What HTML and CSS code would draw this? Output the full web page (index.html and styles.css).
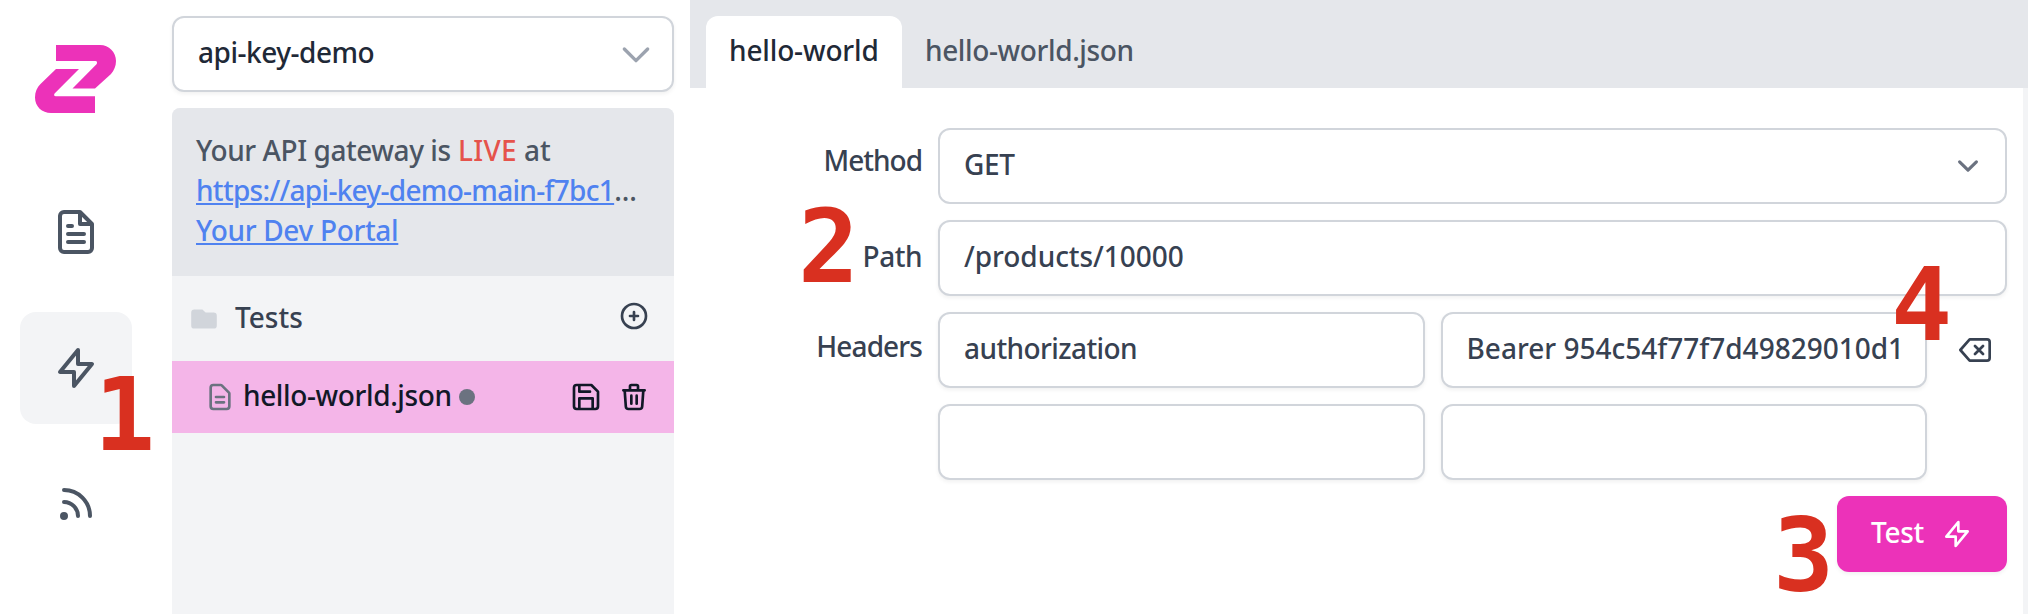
FILE: index.html
```
<!DOCTYPE html>
<html lang="en">
<head>
<meta charset="utf-8">
<title>API gateway tests</title>
<link rel="stylesheet" href="styles.css">
</head>
<body>
<nav class="rail">
  <svg class="logo" viewBox="35 45 81 68"><path d="M56 45H100C109 45 116 52 116 61C116 66 114 70.5 111 74L95 88.500H72.500L96.500 64.200C97.600 62.900 97 61 95.500 61H56ZM56 69H79L54.600 93.500C53.600 95 54.200 96.300 55.800 96.300H95V113H51C42 113 35 106.500 35 97.500C35 92 37 87.500 40.500 84Z"/></svg>
  <a class="rail-item"><svg class="icon icon-lg" viewBox="0 0 24 24"><path d="M14 2H6a2 2 0 0 0-2 2v16a2 2 0 0 0 2 2h12a2 2 0 0 0 2-2V8zM14 2v6h6M16 13H8M16 17H8M10 9H8"/></svg></a>
  <a class="rail-item active"><svg class="icon icon-lg" viewBox="0 0 24 24"><path d="M13 10V3L4 14h7v7l9-11h-7z"/></svg></a>
  <a class="rail-item"><svg class="icon icon-lg" viewBox="0 0 24 24"><path d="M6 5c7.180 0 13 5.820 13 13M6 11a7 7 0 017 7m-6 0a1 1 0 11-2 0 1 1 0 012 0z"/></svg></a>
</nav>

<aside class="explorer">
  <div class="box project">
    <span class="t-project">api-key-demo</span>
    <svg class="icon chevron-lg" viewBox="0 0 24 24"><path d="M19 9l-7 7-7-7"/></svg>
  </div>
  <div class="panel">
    <div class="info">
      <div><span class="t-gateway">Your API gateway is</span> <span class="live">LIVE</span> <span>at</span></div>
      <div><a class="link t-url">https://api-key-demo-main-f7bc1</a><span class="dots">...</span></div>
      <div><a class="link t-portal">Your Dev Portal</a></div>
    </div>
    <div class="folder">
      <svg class="icon-folder" viewBox="0 0 20 20"><path d="M2 6a2 2 0 012-2h5l2 2h5a2 2 0 012 2v6a2 2 0 01-2 2H4a2 2 0 01-2-2V6z"/></svg>
      <span class="folder-name">Tests</span>
      <svg class="icon" viewBox="0 0 24 24"><path d="M12 9v3m0 0v3m0-3h3m-3 0H9m12 0a9 9 0 11-18 0 9 9 0 0118 0z"/></svg>
    </div>
    <div class="file">
      <svg class="icon file-icon" viewBox="0 0 24 24"><path d="M9 12h6m-6 4h6m2 5H7a2 2 0 01-2-2V5a2 2 0 012-2h5.586a1 1 0 01.707.293l5.414 5.414a1 1 0 01.293.707V19a2 2 0 01-2 2z"/></svg>
      <span class="file-name t-json">hello-world.json</span>
      <span class="dirty"></span>
      <svg class="icon save" viewBox="0 0 24 24"><path d="M19 21H5a2 2 0 0 1-2-2V5a2 2 0 0 1 2-2h11l5 5v11a2 2 0 0 1-2 2zM17 21v-8H7v8M7 3v5h8"/></svg>
      <svg class="icon" viewBox="0 0 24 24"><path d="M19 7l-.867 12.142A2 2 0 0116.138 21H7.862a2 2 0 01-1.995-1.858L5 7m5 4v6m4-6v6m1-10V4a1 1 0 00-1-1h-4a1 1 0 00-1 1v3M4 7h16"/></svg>
    </div>
  </div>
</aside>

<main class="main">
  <header class="tabs">
    <div class="tab selected"><span class="t-tab">hello-world</span></div>
    <div class="tab"><span class="t-json">hello-world.json</span></div>
  </header>
  <div class="content">
    <form class="form">
      <label class="label label-method">Method</label>
      <div class="box flat wide">
        <span class="t-get">GET</span>
        <svg class="chevron-sm" viewBox="0 0 20 20"><path d="M6 8l4 4 4-4"/></svg>
      </div>
      <label class="label label-path">Path</label>
      <div class="box wide"><span class="t-path">/products/10000</span></div>
      <label class="label label-headers">Headers</label>
      <div class="box"><span class="t-auth">authorization</span></div>
      <div class="box"><span class="t-bearer">Bearer 954c54f77f7d49829010d1</span></div>
      <div class="remove"><svg class="icon" viewBox="0 0 24 24"><path d="M21 4H8l-7 8 7 8h13a2 2 0 0 0 2-2V6a2 2 0 0 0-2-2zM18 9l-6 6M12 9l6 6"/></svg></div>
      <div class="box blank"></div>
      <div class="box"></div>
      <button class="run" type="button"><span>Test</span><svg class="icon" viewBox="0 0 24 24"><path d="M13 10V3L4 14h7v7l9-11h-7z"/></svg></button>
    </form>
  </div>
</main>

<span class="mark mark-1">1</span>
<span class="mark mark-2">2</span>
<span class="mark mark-3">3</span>
<span class="mark mark-4">4</span>
</body>
</html>
```
FILE: styles.css
```
* { box-sizing: border-box; }

body {
  margin: 0;
  display: flex;
  width: 2028px;
  height: 614px;
  overflow: hidden;
  position: relative;
  background: #fff;
  color: #374151;
  font: 500 28px/40px "Noto Sans", sans-serif;
  white-space: nowrap;
}

svg { display: block; flex: none; }

.icon {
  width: 32px;
  height: 32px;
  fill: none;
  stroke: currentColor;
  stroke-width: 2;
  stroke-linecap: round;
  stroke-linejoin: round;
}
.icon-lg { width: 48px; height: 48px; }

/* Navigation rail */
.rail {
  width: 152px;
  flex: none;
  padding-top: 45px;
  display: flex;
  flex-direction: column;
  align-items: center;
  gap: 24px;
  color: #4b5563;
}
.logo { width: 81px; height: 68px; fill: #ec32b9; margin: 0 1px 39px 0; }
.rail-item {
  width: 112px;
  height: 112px;
  flex: none;
  border-radius: 16px;
  display: flex;
  align-items: center;
  justify-content: center;
}
.rail-item.active { background: #f3f4f6; }

/* Shared field box */
.box {
  height: 76px;
  min-width: 0;
  padding: 0 24px 4px;
  border: 2px solid #d1d5db;
  border-radius: 12px;
  background: #fff;
  box-shadow: 0 2px 4px rgba(0, 0, 0, .06);
  display: flex;
  align-items: center;
  justify-content: space-between;
}
.flat { box-shadow: none; }

/* Explorer */
.explorer {
  width: 502px;
  flex: none;
  margin: 0 16px 0 20px;
  padding-top: 16px;
  display: flex;
  flex-direction: column;
  gap: 16px;
}
.project { flex: none; color: #1f2937; padding-right: 16px; }
.chevron-lg { width: 40px; height: 40px; color: #9ca3af; margin-top: 4px; }
.panel { flex: 1; background: #f3f4f6; border-radius: 8px 8px 0 0; overflow: hidden; }
.info { height: 168px; padding: 22px 24px 0; background: #e5e7eb; color: #4b5563; }
.live { color: #e5534b; letter-spacing: .3px; }
.link {
  color: #4f82f0;
  text-decoration: underline;
  text-decoration-thickness: 2px;
  text-underline-offset: 2px;
}
.folder { height: 85px; padding: 0 24px 0 16px; display: flex; align-items: center; }
.icon-folder { width: 32px; height: 32px; fill: #d1d5db; }
.folder-name { flex: 1; margin-left: 15px; padding-bottom: 3px; }
.folder .icon { margin-bottom: 5px; }
.file {
  height: 72px;
  padding: 0 24px 0 32px;
  background: #f4b5e8;
  color: #111827;
  display: flex;
  align-items: center;
}
.file-icon { color: #6b7280; }
.file-name { margin-left: 7px; padding-bottom: 4px; }
.dirty { width: 16px; height: 16px; border-radius: 50%; background: #6b7280; margin: 0 auto 0 7px; }
.save { margin-right: 16px; }

/* Tabs */
.main { flex: 1; display: flex; flex-direction: column; }
.tabs { height: 88px; flex: none; padding: 16px 16px 0; background: #e5e7eb; display: flex; color: #4b5563; }
.tab { padding: 0 0 4px 23px; display: flex; align-items: center; }
.tab.selected { width: 196px; background: #fff; border-radius: 12px 12px 0 0; color: #1f2937; }

/* Request form */
.content { flex: 1; border-right: 5px solid #f3f4f6; padding: 40px 16px 0 0; }
.form {
  display: grid;
  grid-template-columns: 232px 1fr 1fr 64px;
  grid-auto-rows: 76px;
  gap: 16px;
}
.label { text-align: right; }
.label-method { padding-top: 12px; letter-spacing: -1px; }
.label-path { padding-top: 16px; letter-spacing: -.5px; }
.label-headers { padding-top: 14px; letter-spacing: -.88px; }
.wide { grid-column: 2 / 5; }
.blank { grid-column: 2; }
.remove { display: flex; align-items: center; justify-content: center; }
.chevron-sm {
  width: 42px;
  height: 42px;
  margin: 4px -8px 0 0;
  fill: none;
  stroke: #6b7280;
  stroke-width: 1.5;
  stroke-linecap: round;
  stroke-linejoin: round;
}
.run {
  grid-column: 2 / 5;
  justify-self: end;
  width: 170px;
  padding: 0 34px;
  border: 0;
  border-radius: 12px;
  background: #ec32b9;
  box-shadow: 0 2px 4px rgba(0, 0, 0, .06);
  color: #fff;
  font: inherit;
  display: flex;
  align-items: center;
  justify-content: space-between;
}
.run span { padding-bottom: 4px; letter-spacing: -.3px; }

/* Tracking per text */
.t-project { letter-spacing: -.48px; }
.t-gateway { letter-spacing: -.43px; }
.t-url { letter-spacing: -.7px; }
.t-portal { letter-spacing: -.32px; }
.t-json { letter-spacing: -.38px; }
.t-tab { letter-spacing: -.15px; }
.t-get { letter-spacing: -.3px; }
.t-path { letter-spacing: -.05px; }
.t-auth { letter-spacing: -.59px; }
.t-bearer { letter-spacing: 0; }

/* Numbered callouts laid over the interface */
.mark {
  position: absolute;
  color: #d93020;
  font: bold 101.500px/1 "DejaVu Sans Mono", monospace;
}
.mark-1 { left: 94px; top: 365px; }
.mark-2 { left: 798px; top: 197px; }
.mark-3 { left: 1773px; top: 506px; }
.mark-4 { left: 1891px; top: 255px; }
```
